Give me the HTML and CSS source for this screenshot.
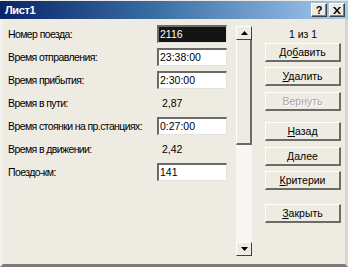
FILE: index.html
```html
<!DOCTYPE html>
<html lang="ru">
<head>
<meta charset="utf-8">
<title>Лист1</title>
<link rel="stylesheet" href="styles.css">
</head>
<body>
<div class="window">
  <div class="titlebar">
    <span class="title">Лист1</span>
    <div class="tb-btns">
      <span class="tb-btn">?</span>
      <span class="tb-btn tb-close">
        <svg width="8" height="7" viewBox="0 0 8 7"><path d="M0 0h2l2 2.5L6 0h2L5 3.5 8 7H6L4 4.5 2 7H0l3-3.5z" fill="#000"/></svg>
      </span>
    </div>
  </div>
  <div class="body">
    <div class="form">
      <div class="row"><span class="label">Номер поезда:</span><span class="field selected">2116</span></div>
      <div class="row"><span class="label">Время отправления:</span><span class="field">23:38:00</span></div>
      <div class="row"><span class="label">Время прибытия:</span><span class="field">2:30:00</span></div>
      <div class="row"><span class="label">Время в пути:</span><span class="value">2,87</span></div>
      <div class="row"><span class="label">Время стоянки на пр.станциях:</span><span class="field">0:27:00</span></div>
      <div class="row"><span class="label">Время в движении:</span><span class="value">2,42</span></div>
      <div class="row"><span class="label">Поездо-км:</span><span class="field">141</span></div>
    </div>
    <div class="scrollbar">
      <div class="sb-btn"><svg width="7" height="4" viewBox="0 0 7 4"><path d="M3.5 0L7 4H0z" fill="#000"/></svg></div>
      <div class="sb-track"><div class="sb-thumb"></div></div>
      <div class="sb-btn"><svg width="7" height="4" viewBox="0 0 7 4"><path d="M0 0h7L3.5 4z" fill="#000"/></svg></div>
    </div>
    <div class="actions">
      <div class="counter">1 из 1</div>
      <div class="btn first">До<u>б</u>авить</div>
      <div class="btn g5"><u>У</u>далить</div>
      <div class="btn g6 disabled">Вернуть</div>
      <div class="btn g11"><u>Н</u>азад</div>
      <div class="btn g6"><u>Д</u>алее</div>
      <div class="btn g5"><u>К</u>ритерии</div>
      <div class="btn g14"><u>З</u>акрыть</div>
    </div>
  </div>
</div>
</body>
</html>
```

FILE: styles.css
```css
html, body {
  margin: 0;
  padding: 0;
  background: #eeebe3;
}
.window {
  width: 348px;
  height: 267px;
  box-sizing: border-box;
  background: #eeebe3;
  border-left: 3px solid #f4f2ec;
  border-right: 3px solid #d8d4cc;
  border-bottom: 3px solid #7c7a76;
  border-top: 1px solid #eeebe3;
  display: flex;
  flex-direction: column;
  font-family: "Liberation Sans", Arial, sans-serif;
  font-size: 10.5px;
  color: #000;
}
.titlebar {
  height: 18px;
  margin: 0 -3px;
  padding: 0 3px 0 5px;
  background: linear-gradient(to right, #0a246a 0%, #3a6ea5 45%, #a6caf0 100%);
  display: flex;
  align-items: center;
  justify-content: space-between;
}
.title {
  color: #fff;
  font-weight: bold;
  font-size: 11px;
  letter-spacing: -0.4px;
}
.tb-btns {
  display: flex;
  gap: 2px;
}
.tb-btn {
  width: 14px;
  height: 12px;
  background: #eeebe3;
  border-top: 1px solid #fff;
  border-left: 1px solid #fff;
  border-right: 1px solid #404040;
  border-bottom: 1px solid #404040;
  box-shadow: inset -1px -1px 0 #808080;
  display: flex;
  align-items: center;
  justify-content: center;
  font-weight: bold;
  font-size: 11px;
  line-height: 12px;
}
.body {
  flex: 1;
  display: flex;
  padding-top: 3px;
}
.form {
  width: 233px;
  padding-left: 5px;
  box-sizing: border-box;
}
.row {
  height: 23px;
  display: flex;
  align-items: center;
}
.label {
  width: 149px;
  white-space: nowrap;
  letter-spacing: -0.6px;
}
.field {
  width: 70px;
  height: 18px;
  box-sizing: border-box;
  background: #fff;
  border-top: 2px solid #6c6a66;
  border-left: 2px solid #6c6a66;
  border-right: 1px solid #e4e2dc;
  border-bottom: 1px solid #e4e2dc;
  padding-left: 1px;
  line-height: 15px;
}
.field.selected {
  background: #141414;
  color: #fff;
}
.value {
  padding-left: 5px;
}
.scrollbar {
  width: 16px;
  margin: 4px 0 8px;
  display: flex;
  flex-direction: column;
  background: #f8f6f2;
}
.sb-btn {
  height: 14px;
  box-sizing: border-box;
  background: #eeebe3;
  border-top: 1px solid #fff;
  border-left: 1px solid #fff;
  border-right: 1px solid #404040;
  border-bottom: 1px solid #404040;
  display: flex;
  align-items: center;
  justify-content: center;
}
.sb-track {
  flex: 1;
}
.sb-thumb {
  height: 105px;
  box-sizing: border-box;
  background: #eeebe3;
  border-left: 1px solid #fff;
  border-right: 2px solid #6c6a66;
  border-bottom: 2px solid #6c6a66;
}
.actions {
  flex: 1;
  padding: 5px 0 0 13px;
}
.counter {
  width: 76px;
  text-align: center;
  height: 14px;
  line-height: 14px;
}
.btn {
  width: 76px;
  height: 19px;
  box-sizing: border-box;
  border-top: 1px solid #fff;
  border-left: 1px solid #fff;
  border-right: 2px solid #6c6a66;
  border-bottom: 2px solid #6c6a66;
  text-align: center;
  line-height: 16px;
}
.btn u {
  text-decoration-thickness: 1px;
  text-underline-offset: 1px;
}
.first { margin-top: 2px; }
.g5 { margin-top: 5px; }
.g6 { margin-top: 6px; }
.g11 { margin-top: 11px; }
.g14 { margin-top: 14px; }
.disabled {
  color: #a8a6a0;
  text-shadow: 1px 1px 0 #fff;
}
```
